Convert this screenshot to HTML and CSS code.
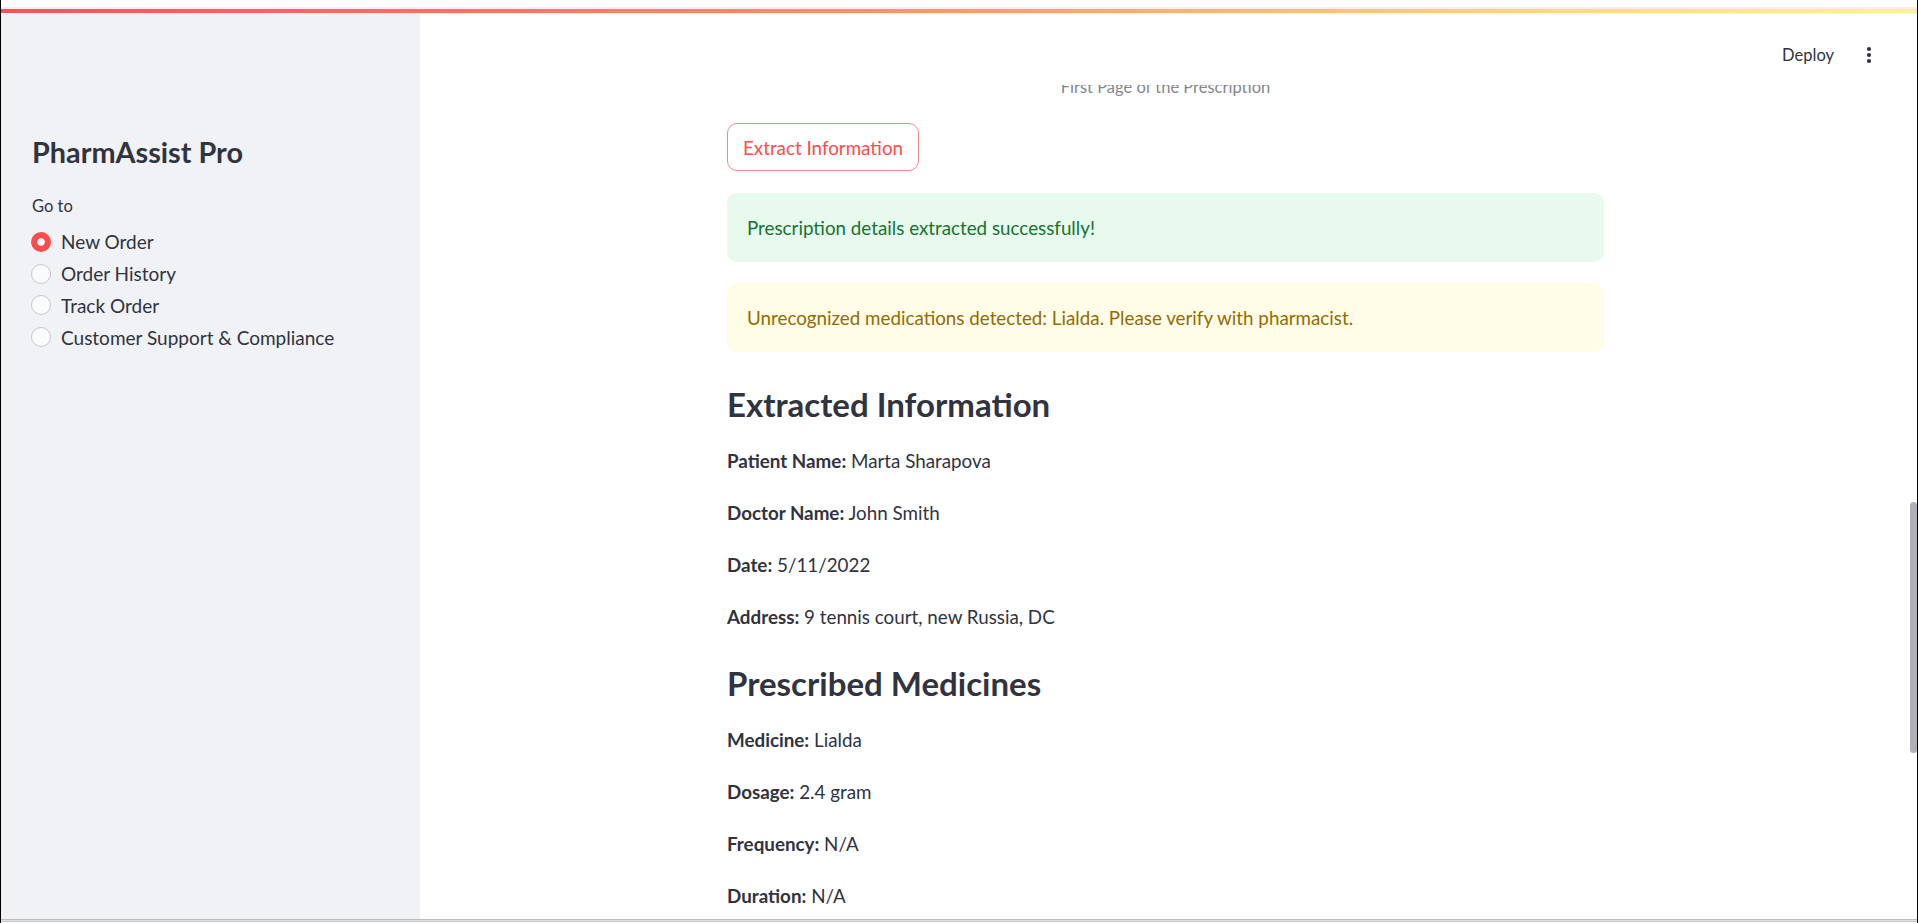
FILE: index.html
```html
<!DOCTYPE html>
<html lang="en">
<head>
<meta charset="utf-8">
<title>PharmAssist Pro</title>
<link rel="stylesheet" href="styles.css">
</head>
<body>
<div class="window">
  <div class="top-strip"><div class="decoration"></div></div>
  <div class="app">
    <aside class="sidebar">
      <h1 class="sb-title">PharmAssist Pro</h1>
      <div class="sb-label">Go to</div>
      <div class="radio-group">
        <div class="radio selected"><span class="dot"></span><span class="radio-text">New Order</span></div>
        <div class="radio"><span class="dot"></span><span class="radio-text">Order History</span></div>
        <div class="radio"><span class="dot"></span><span class="radio-text">Track Order</span></div>
        <div class="radio"><span class="dot"></span><span class="radio-text">Customer Support &amp; Compliance</span></div>
      </div>
    </aside>
    <main class="main">
      <div class="content">
        <div class="caption">First Page of the Prescription</div>
        <button class="btn">Extract Information</button>
        <div class="alert success">Prescription details extracted successfully!</div>
        <div class="alert warning">Unrecognized medications detected: Lialda. Please verify with pharmacist.</div>
        <h3 class="heading">Extracted Information</h3>
        <p class="field"><strong>Patient Name:</strong> Marta Sharapova</p>
        <p class="field"><strong>Doctor Name:</strong> John Smith</p>
        <p class="field"><strong>Date:</strong> 5/11/2022</p>
        <p class="field"><strong>Address:</strong> 9 tennis court, new Russia, DC</p>
        <h3 class="heading">Prescribed Medicines</h3>
        <p class="field"><strong>Medicine:</strong> Lialda</p>
        <p class="field"><strong>Dosage:</strong> 2.4 gram</p>
        <p class="field"><strong>Frequency:</strong> N/A</p>
        <p class="field"><strong>Duration:</strong> N/A</p>
      </div>
      <header class="header">
        <span class="deploy">Deploy</span>
        <svg class="kebab" width="20" height="20" viewBox="0 0 20 20" aria-hidden="true">
          <circle cx="10" cy="4" r="2.1" fill="#31333f"/>
          <circle cx="10" cy="10" r="2.1" fill="#31333f"/>
          <circle cx="10" cy="16" r="2.1" fill="#31333f"/>
        </svg>
      </header>
      <div class="scroll-thumb"></div>
    </main>
  </div>
  <div class="bottom-edge"></div>
</div>
</body>
</html>
```

FILE: styles.css
```css
* {
  box-sizing: border-box;
}

html, body {
  margin: 0;
  padding: 0;
  background: #ffffff;
}

body {
  font-family: "Lato", "Noto Sans", sans-serif;
  color: #31333f;
}

.window {
  width: 1918px;
  height: 923px;
  border-left: 1px solid #000;
  border-right: 1px solid #000;
  display: flex;
  flex-direction: column;
  overflow: hidden;
  background: #fff;
}

.top-strip {
  height: 14px;
  padding-top: 9px;
  background: linear-gradient(#fbfbfe 0 1px, #ffffff 1px 7px, #fde9e9 7px 9px);
  border-bottom: 1px solid #e8f6fa;
}

.decoration {
  height: 4px;
  background: linear-gradient(90deg, #f2545b 0%, #f8935f 45%, #fbd877 80%, #fdf48f 100%);
}

.app {
  flex: 1;
  display: flex;
  min-height: 0;
}

.sidebar {
  width: 419px;
  flex: none;
  background: #f0f2f6;
  padding: 120px 30px 0 30px;
}

.sb-title {
  margin: 0;
  font-size: 28.8px;
  line-height: 36px;
  font-weight: 700;
  color: #31333f;
  padding-left: 1px;
}

.sb-label {
  margin-top: 24px;
  font-size: 16.5px;
  line-height: 24px;
  padding-left: 1px;
}

.radio-group {
  margin-top: 8px;
  display: flex;
  flex-direction: column;
}

.radio {
  height: 31.8px;
  display: flex;
  align-items: center;
  gap: 10px;
  font-size: 19px;
}

.dot {
  width: 20px;
  height: 20px;
  border-radius: 50%;
  flex: none;
  background: #fbfbfc;
  border: 1px solid #c5c7ce;
}

.radio.selected .dot {
  border: none;
  background: radial-gradient(circle, #ffffff 0 3.4px, #ff4b4b 4.2px);
}

.main {
  flex: 1;
  position: relative;
  padding-right: 6px;
  overflow: hidden;
}

.content {
  width: 877px;
  margin: 0 auto;
  padding-top: 60px;
  display: flex;
  flex-direction: column;
  align-items: flex-start;
  gap: 20px;
}

.caption {
  align-self: stretch;
  text-align: center;
  font-size: 16.5px;
  line-height: 26px;
  color: #84868d;
}

.btn {
  margin-top: 3px;
  height: 48px;
  padding: 0 15px;
  border: 1px solid #f08a8a;
  border-radius: 10px;
  background: #fff;
  color: #ff4b4b;
  font-family: inherit;
  font-size: 18.8px;
}

.alert {
  align-self: stretch;
  border-radius: 10px;
  padding: 19px 20px;
  font-size: 18.8px;
  line-height: 31px;
}

.success {
  margin-top: 2px;
  background: #e8f9ee;
  color: #177233;
}

.warning {
  margin-top: 1px;
  background: #fffce7;
  color: #926c05;
}

.heading {
  margin: 11px 0 0 0;
  font-size: 33px;
  line-height: 42px;
  font-weight: 700;
  color: #31333f;
}

.field + .heading {
  margin-top: 9px;
}

.field {
  margin: 0;
  font-size: 18.8px;
  line-height: 32px;
}

.field strong {
  font-weight: 700;
}

.header {
  position: absolute;
  top: 0;
  left: 0;
  right: 0;
  height: 71px;
  background: #fff;
  display: flex;
  justify-content: flex-end;
  align-items: flex-start;
  padding: 29px 38px 0 0;
  gap: 25px;
}

.deploy {
  font-size: 16.5px;
  line-height: 24px;
  color: #31333f;
}

.kebab {
  display: block;
  margin-top: 2px;
}

.scroll-thumb {
  position: absolute;
  right: 0;
  top: 488px;
  width: 7px;
  height: 251px;
  border-radius: 4px;
  background: #b1b0b6;
}

.bottom-edge {
  height: 4px;
  flex: none;
  background: linear-gradient(#bdbdbd 0 1px, #e2e2e2 1px 2px, #c4c4c4 2px 3px, #ffffff 3px);
}
```
